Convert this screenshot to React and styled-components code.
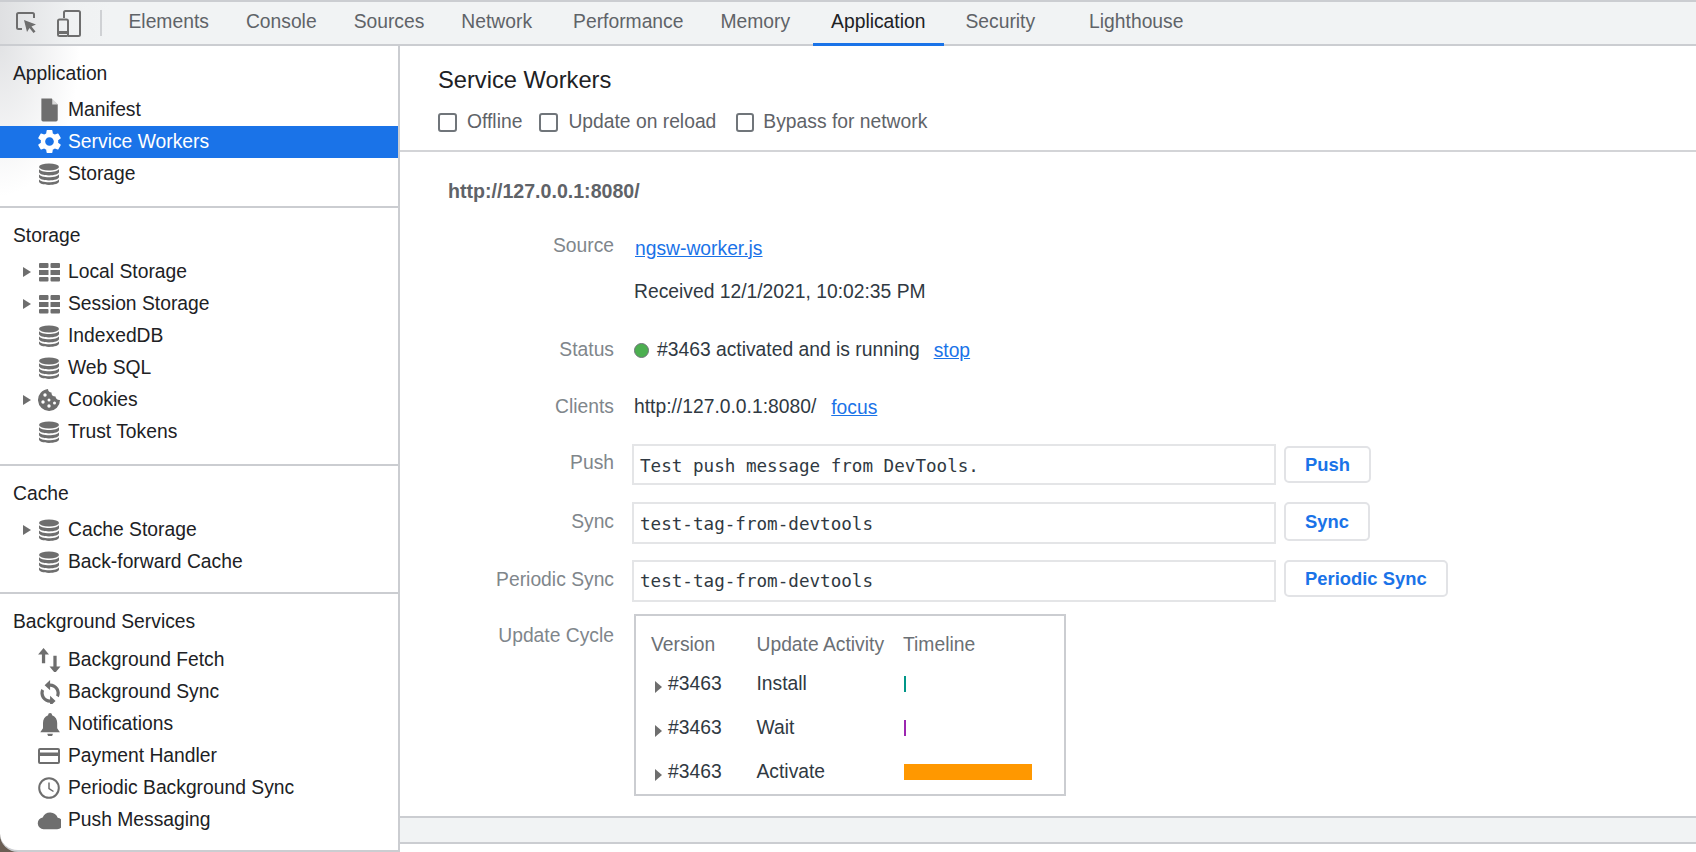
import React from "react";
import styled, { createGlobalStyle } from "styled-components";

const GlobalStyle = createGlobalStyle`
  html, body {
    margin: 0;
    height: 100%;
    overflow: hidden;
    background: #fff;
  }
  #root {
    height: 100%;
  }
`;

const SANS = `"Liberation Sans", Arial, sans-serif`;
const BLUE = "#1a73e8";
const LINE = "#cbcdd1";

// === Layout ===
const Page = styled.div`
  height: 852px;
  display: flex;
  flex-direction: column;
  font-family: ${SANS};
  font-size: 19.3px;
  color: #202124;
  background: #fff;
`;

const Body = styled.div`
  flex: 1;
  display: flex;
  min-height: 0;
`;

// === Toolbar ===
const Toolbar = styled.div`
  height: 42px;
  flex: none;
  display: flex;
  align-items: stretch;
  border-top: 2px solid ${LINE};
  border-bottom: 2px solid ${LINE};
  background: linear-gradient(90deg, #dfe0e2 0, #eff1f2 70px, #f1f3f4 110px);
`;

const ToolIcons = styled.div`
  width: 100px;
  display: flex;
  align-items: center;
  padding-left: 16px;
  gap: 19px;
  box-sizing: border-box;
`;

const Separator = styled.div`
  width: 2px;
  height: 26px;
  margin: 8px 8px 0 0;
  background: #cfd1d4;
`;

const Tab = styled.div`
  display: flex;
  align-items: center;
  padding: 0 18.5px 2px;
  margin-left: ${({ $gap }) => $gap || 0}px;
  margin-bottom: -2px;
  color: ${({ $active }) => ($active ? "#202124" : "#5f6368")};
  border-bottom: 3px solid ${({ $active }) => ($active ? BLUE : "transparent")};
  box-sizing: border-box;
`;

// === Sidebar ===
const SidebarShell = styled.div`
  width: 400px;
  flex: none;
  background: #6a5e54;
`;

const Sidebar = styled.nav`
  height: 100%;
  box-sizing: border-box;
  border-right: 2px solid ${LINE};
  border-bottom: 2px solid ${LINE};
  border-bottom-left-radius: 18px;
  background:
    radial-gradient(ellipse 80px 150px at 0 0, #e2e3e5, rgba(255, 255, 255, 0)),
    #fff;
`;

const Section = styled.section`
  padding: 13px 0 ${({ $bottom }) => $bottom}px;
  border-bottom: ${({ $last }) => ($last ? "none" : `2px solid ${LINE}`)};
`;

const SectionTitle = styled.div`
  height: 30px;
  line-height: 30px;
  padding-left: 13px;
  margin-bottom: ${({ $gap }) => $gap}px;
`;

const Row = styled.div`
  height: 32px;
  box-sizing: border-box;
  display: flex;
  align-items: center;
  padding: 0 0 1px 23px;
  color: ${({ $selected }) => ($selected ? "#fff" : "#202124")};
  background: ${({ $selected }) => ($selected ? BLUE : "transparent")};
`;

const Caret = styled.span`
  width: 15px;
  flex: none;
  display: flex;
`;

const Triangle = styled.span`
  width: 0;
  height: 0;
  border-left: 8px solid #6e6e6e;
  border-top: 5.5px solid transparent;
  border-bottom: 5.5px solid transparent;
`;

const IconSlot = styled.span`
  width: 22px;
  height: 24px;
  flex: none;
  margin-right: 8px;
  display: flex;
  align-items: center;
  justify-content: center;
  color: ${({ $selected }) => ($selected ? "#fff" : "#6e6e6e")};

  svg {
    flex: none;
  }
`;

// === Main ===
const Main = styled.main`
  flex: 1;
  min-width: 0;
`;

const Header = styled.div`
  height: 106px;
  box-sizing: border-box;
  padding: 18px 0 0 38px;
  border-bottom: 2px solid #d3d4d7;
`;

const Heading = styled.h1`
  margin: 0;
  height: 32px;
  line-height: 32px;
  font-size: 23.7px;
  font-weight: 400;
`;

const Options = styled.div`
  display: flex;
  align-items: center;
  height: 30px;
  margin-top: 11px;
  color: #5f6368;
`;

const Option = styled.label`
  display: flex;
  align-items: center;
  margin-right: ${({ $gap }) => $gap}px;
`;

const Checkbox = styled.span`
  width: ${({ $small }) => ($small ? 14 : 15)}px;
  height: 15px;
  margin-right: ${({ $small }) => ($small ? 9 : 10)}px;
  border: 2px solid #70757a;
  border-radius: 3px;
`;

const Report = styled.div`
  height: 666px;
  box-sizing: border-box;
  padding: 24px 0 0 48px;
  border-bottom: 2px solid ${LINE};
`;

const ReportTitle = styled.div`
  height: 30px;
  line-height: 30px;
  font-weight: 700;
  font-size: 19.6px;
  color: #5f6368;
  margin-bottom: ${({ $gap }) => $gap}px;
`;

const Field = styled.div`
  display: grid;
  grid-template-columns: 166px 1fr;
  column-gap: 20px;
  align-items: ${({ $start }) => ($start ? "start" : "center")};
  height: ${({ $height }) => $height}px;
  margin-top: ${({ $top }) => $top || 0}px;
`;

const Label = styled.div`
  text-align: right;
  color: #80868b;
  padding-top: ${({ $pad }) => $pad || 0}px;
  padding-bottom: ${({ $lift }) => $lift || 0}px;
`;

const Value = styled.div`
  display: flex;
  align-items: center;
  color: #303942;
`;

const LinkText = styled.a`
  color: ${BLUE};
  text-decoration: underline;
  margin-left: ${({ $gap }) => $gap || 0}px;
  padding-top: 2px;
`;

const StatusDot = styled.span`
  width: 13px;
  height: 13px;
  margin-right: 8px;
  border-radius: 50%;
  background: #4caf50;
  border: 1.5px solid #70757a;
`;

const TextBox = styled.div`
  width: 644px;
  height: ${({ $height }) => $height}px;
  margin-left: -2px;
  box-sizing: border-box;
  padding: ${({ $pad }) => $pad ?? 2}px 0 0 6px;
  display: flex;
  align-items: center;
  border: 2px solid #e4e5e7;
  font-family: "DejaVu Sans Mono", monospace;
  font-size: 17.6px;
  color: #303942;
`;

const ActionButton = styled.button`
  height: ${({ $height }) => $height || 37}px;
  margin: 0 0 ${({ $lift }) => $lift || 0}px 8px;
  padding: 0 19px;
  box-sizing: border-box;
  background: #fff;
  border: 2px solid #e2e3e6;
  border-radius: 5px;
  font-family: ${SANS};
  font-size: 18.4px;
  font-weight: 700;
  color: ${BLUE};
`;

const CycleBox = styled.div`
  width: 432px;
  height: 182px;
  box-sizing: border-box;
  padding: 13px 0 0 15px;
  border: 2px solid ${LINE};
`;

const CycleHead = styled.div`
  display: grid;
  grid-template-columns: 105.5px 146.5px 1fr;
  align-items: center;
  height: 31px;
  margin-bottom: 2px;
  color: #6b7075;
`;

const CycleRow = styled(CycleHead)`
  height: 44px;
  margin-bottom: 0;
  color: #303942;
`;

const VersionCell = styled.div`
  display: flex;
  align-items: center;
  padding-left: 4px;
`;

const VersionCaret = styled.span`
  width: 0;
  height: 0;
  margin: 5px 6px 0 0;
  border-left: 7px solid #6e6e6e;
  border-top: 6px solid transparent;
  border-bottom: 6px solid transparent;
`;

const Bar = styled.div`
  height: 16px;
  margin-left: 1px;
  background: ${({ $color }) => $color};
`;

const Footer = styled.div`
  height: 24px;
  background: #f1f3f4;
  border-bottom: 2px solid ${LINE};
`;

// === Icons ===
const Svg = ({ size = 22, children, ...rest }) => (
  <svg width={size} height={size} viewBox="0 0 22 22" fill="currentColor" {...rest}>
    {children}
  </svg>
);

const FileIcon = () => (
  <Svg size={24}>
    <path d="M4 1h9.5L19 6.5V20.5c0 .8-.7 1.5-1.5 1.5h-12c-.8 0-1.5-.7-1.5-1.5V1z" transform="translate(0 -.5)" />
    <path d="M14 .5v5.5h5z" fill="#fff" opacity=".75" />
  </Svg>
);

const GearIcon = () => (
  <svg width="29" height="29" viewBox="0 0 24 24" fill="currentColor">
    <path d="M19.14 12.94c.04-.3.06-.61.06-.94 0-.32-.02-.64-.07-.94l2.03-1.58a.49.49 0 0 0 .12-.61l-1.92-3.32a.488.488 0 0 0-.59-.22l-2.39.96c-.5-.38-1.03-.7-1.62-.94l-.36-2.54a.484.484 0 0 0-.48-.41h-3.84c-.24 0-.43.17-.47.41l-.36 2.54c-.59.24-1.13.57-1.62.94l-2.39-.96c-.22-.08-.47 0-.59.22L2.74 8.87c-.12.21-.08.47.12.61l2.03 1.58c-.05.3-.09.63-.09.94s.02.64.07.94l-2.03 1.58a.49.49 0 0 0-.12.61l1.92 3.32c.12.22.37.29.59.22l2.39-.96c.5.38 1.03.7 1.62.94l.36 2.54c.05.24.24.41.48.41h3.84c.24 0 .44-.17.47-.41l.36-2.54c.59-.24 1.13-.56 1.62-.94l2.39.96c.22.08.47 0 .59-.22l1.92-3.32c.12-.22.07-.47-.12-.61l-2.01-1.58zM12 15.6c-1.98 0-3.6-1.62-3.6-3.6s1.62-3.6 3.6-3.6 3.6 1.62 3.6 3.6-1.62 3.6-3.6 3.6z" />
  </svg>
);

const DatabaseIcon = () => (
  <Svg>
    <ellipse cx="11" cy="4" rx="10" ry="3.4" />
    <path d="M1 6c1 2 5 3 10 3s9-1 10-3v3c0 1.9-4.5 3.4-10 3.4S1 10.9 1 9z" />
    <path d="M1 11.2c1 2 5 3 10 3s9-1 10-3V14c0 1.9-4.5 3.4-10 3.4S1 15.9 1 14z" />
    <path d="M1 16.2c1 2 5 3 10 3s9-1 10-3v2.4c0 1.9-4.5 3.4-10 3.4S1 20.5 1 18.6z" />
  </Svg>
);

const TableIcon = () => (
  <Svg>
    <rect x="1" y="2" width="9.5" height="5" rx="1" />
    <rect x="12.5" y="2" width="9.5" height="5" rx="1" />
    <rect x="1" y="9" width="9.5" height="5" />
    <rect x="12.5" y="9" width="9.5" height="5" />
    <rect x="1" y="16" width="9.5" height="4.5" rx="1" />
    <rect x="12.5" y="16" width="9.5" height="4.5" rx="1" />
  </Svg>
);

const CookieIcon = () => (
  <Svg>
    <path d="M10 0a11 11 0 1 0 12 11c-2.5.3-4.2-1-4.500-3.500C15 7.5 13.300 6 13.500 3.500 11.500 3.500 10 2 10 0z" />
    <g fill="#fff">
      <circle cx="7" cy="6" r="1.7" />
      <circle cx="5" cy="13" r="1.7" />
      <circle cx="11" cy="11" r="1.5" />
      <circle cx="11" cy="17" r="1.7" />
      <circle cx="16.5" cy="14" r="1.5" />
    </g>
  </Svg>
);

const FetchIcon = () => (
  <Svg size={24}>
    <path d="M6 0l5 6H7.5v8h-3V6H1zM15 7h3v10h3.5l-5 6-5-6H15z" />
  </Svg>
);

const SyncIcon = () => (
  <Svg size={24}>
    <path d="M12 0v3.2a8.800 8.800 0 0 1 8 12.600l-2.500-1.700A5.800 5.800 0 0 0 12 6.200V9.500L7 4.700zM12 24v-3.200a8.800 8.800 0 0 1-8-12.600l2.500 1.700A5.800 5.800 0 0 0 12 17.800v-3.300l5 4.800z" />
  </Svg>
);

const BellIcon = () => (
  <Svg size={24}>
    <path d="M12 1a1.800 1.800 0 0 1 1.800 1.900C17 4 18.500 6.700 18.500 10v5l2.500 3.500H3L5.500 15v-5c0-3.300 1.500-6 4.700-7.100A1.800 1.800 0 0 1 12 1zM9.500 20h5a2.500 2.500 0 0 1-5 0z" />
  </Svg>
);

const CardIcon = () => (
  <Svg>
    <path
      fillRule="evenodd"
      d="M2 3h18a2 2 0 0 1 2 2v12a2 2 0 0 1-2 2H2a2 2 0 0 1-2-2V5a2 2 0 0 1 2-2zm0 2v2.500h18V5zm0 6v6h18v-6z"
    />
  </Svg>
);

const ClockIcon = () => (
  <Svg>
    <circle cx="11" cy="11" r="9.8" fill="none" stroke="currentColor" strokeWidth="2" />
    <path d="M11 5.500V11.500L15.500 14.500" fill="none" stroke="currentColor" strokeWidth="1.5" />
  </Svg>
);

const CloudIcon = () => (
  <Svg size={24}>
    <path d="M6 19.500a5.500 5.500 0 0 1-.8-10.900A7.500 7.500 0 0 1 19 9a5.300 5.300 0 0 1-.500 10.500z" />
  </Svg>
);

const InspectIcon = () => (
  <svg width="22" height="22" viewBox="0 0 22 22" fill="none" stroke="#6e6e6e" strokeWidth="2">
    <path d="M6 17H2.500A1.500 1.500 0 0 1 1 15.500V2.500A1.500 1.500 0 0 1 2.500 1h14A1.500 1.500 0 0 1 18 2.500V6" />
    <path d="M8 8l12 4.500-4.500 2 4 5-2 1.500-4-5-2.500 4z" fill="#6e6e6e" stroke="none" />
  </svg>
);

const DeviceIcon = () => (
  <svg width="25" height="27" viewBox="0 0 25 27" fill="none" stroke="#6e6e6e" strokeWidth="2">
    <path d="M7 8V2.500A1.500 1.500 0 0 1 8.500 1h13A1.500 1.500 0 0 1 23 2.500v22a1.500 1.500 0 0 1-1.500 1.500H11" />
    <rect x="1" y="9.5" width="10" height="16.5" rx="1.5" />
    <path d="M1 22.500h10" strokeWidth="3" />
  </svg>
);

// === Data ===
const TABS = [
  { name: "Elements" },
  { name: "Console" },
  { name: "Sources" },
  { name: "Network" },
  { name: "Performance", gap: 4 },
  { name: "Memory" },
  { name: "Application", gap: 4, active: true },
  { name: "Security", gap: 3 },
  { name: "Lighthouse", gap: 17 },
];

const SECTIONS = [
  {
    title: "Application",
    gap: 5,
    bottom: 16,
    items: [
      { name: "Manifest", Icon: FileIcon },
      { name: "Service Workers", Icon: GearIcon, selected: true },
      { name: "Storage", Icon: DatabaseIcon },
    ],
  },
  {
    title: "Storage",
    gap: 5,
    bottom: 16,
    items: [
      { name: "Local Storage", Icon: TableIcon, caret: true },
      { name: "Session Storage", Icon: TableIcon, caret: true },
      { name: "IndexedDB", Icon: DatabaseIcon },
      { name: "Web SQL", Icon: DatabaseIcon },
      { name: "Cookies", Icon: CookieIcon, caret: true },
      { name: "Trust Tokens", Icon: DatabaseIcon },
    ],
  },
  {
    title: "Cache",
    gap: 5,
    bottom: 14,
    items: [
      { name: "Cache Storage", Icon: DatabaseIcon, caret: true },
      { name: "Back-forward Cache", Icon: DatabaseIcon },
    ],
  },
  {
    title: "Background Services",
    gap: 7,
    bottom: 0,
    last: true,
    items: [
      { name: "Background Fetch", Icon: FetchIcon },
      { name: "Background Sync", Icon: SyncIcon },
      { name: "Notifications", Icon: BellIcon },
      { name: "Payment Handler", Icon: CardIcon },
      { name: "Periodic Background Sync", Icon: ClockIcon },
      { name: "Push Messaging", Icon: CloudIcon },
    ],
  },
];

const CYCLE = [
  { activity: "Install", color: "#009688", width: 2 },
  { activity: "Wait", color: "#9c27b0", width: 2 },
  { activity: "Activate", color: "#ff9800", width: 128 },
];

// === App ===
const App = () => (
  <Page>
    <GlobalStyle />
    <Toolbar>
      <ToolIcons>
        <InspectIcon />
        <DeviceIcon />
      </ToolIcons>
      <Separator />
      {TABS.map((tab) => (
        <Tab key={tab.name} $active={tab.active} $gap={tab.gap}>
          {tab.name}
        </Tab>
      ))}
    </Toolbar>
    <Body>
      <SidebarShell>
        <Sidebar>
          {SECTIONS.map((section) => (
            <Section key={section.title} $bottom={section.bottom} $last={section.last}>
              <SectionTitle $gap={section.gap}>{section.title}</SectionTitle>
              {section.items.map(({ name, Icon, caret, selected }) => (
                <Row key={name} $selected={selected}>
                  <Caret>{caret && <Triangle />}</Caret>
                  <IconSlot $selected={selected}>
                    <Icon />
                  </IconSlot>
                  {name}
                </Row>
              ))}
            </Section>
          ))}
        </Sidebar>
      </SidebarShell>
      <Main>
        <Header>
          <Heading>Service Workers</Heading>
          <Options>
            <Option $gap={17}>
              <Checkbox />
              Offline
            </Option>
            <Option $gap={20}>
              <Checkbox />
              Update on reload
            </Option>
            <Option>
              <Checkbox $small />
              Bypass for network
            </Option>
          </Options>
        </Header>
        <Report>
          <ReportTitle $gap={26}>http://127.0.0.1:8080/</ReportTitle>
          <Field $height={32}>
            <Label $lift={4}>Source</Label>
            <Value>
              <LinkText $gap={1}>ngsw-worker.js</LinkText>
            </Value>
          </Field>
          <Field $height={32} $top={12}>
            <span />
            <Value>Received 12/1/2021, 10:02:35 PM</Value>
          </Field>
          <Field $height={32} $top={26}>
            <Label>Status</Label>
            <Value>
              <StatusDot />
              #3463 activated and is running
              <LinkText $gap={14}>stop</LinkText>
            </Value>
          </Field>
          <Field $height={32} $top={25}>
            <Label>Clients</Label>
            <Value>
              http://127.0.0.1:8080/
              <LinkText $gap={15}>focus</LinkText>
            </Value>
          </Field>
          <Field $height={41} $top={21}>
            <Label $lift={3}>Push</Label>
            <Value>
              <TextBox $height={41}>Test push message from DevTools.</TextBox>
              <ActionButton>Push</ActionButton>
            </Value>
          </Field>
          <Field $height={42} $top={17}>
            <Label $lift={3}>Sync</Label>
            <Value>
              <TextBox $height={42}>test-tag-from-devtools</TextBox>
              <ActionButton $height={39} $lift={3}>Sync</ActionButton>
            </Value>
          </Field>
          <Field $height={42} $top={16}>
            <Label $lift={3}>Periodic Sync</Label>
            <Value>
              <TextBox $height={42} $pad={0}>test-tag-from-devtools</TextBox>
              <ActionButton $lift={5}>Periodic Sync</ActionButton>
            </Value>
          </Field>
          <Field $height={182} $top={12} $start>
            <Label $pad={11}>Update Cycle</Label>
            <CycleBox>
              <CycleHead>
                <div>Version</div>
                <div>Update Activity</div>
                <div>Timeline</div>
              </CycleHead>
              {CYCLE.map((row) => (
                <CycleRow key={row.activity}>
                  <VersionCell>
                    <VersionCaret />
                    #3463
                  </VersionCell>
                  <div>{row.activity}</div>
                  <Bar $color={row.color} style={{ width: row.width }} />
                </CycleRow>
              ))}
            </CycleBox>
          </Field>
        </Report>
        <Footer />
      </Main>
    </Body>
  </Page>
);

export default App;
